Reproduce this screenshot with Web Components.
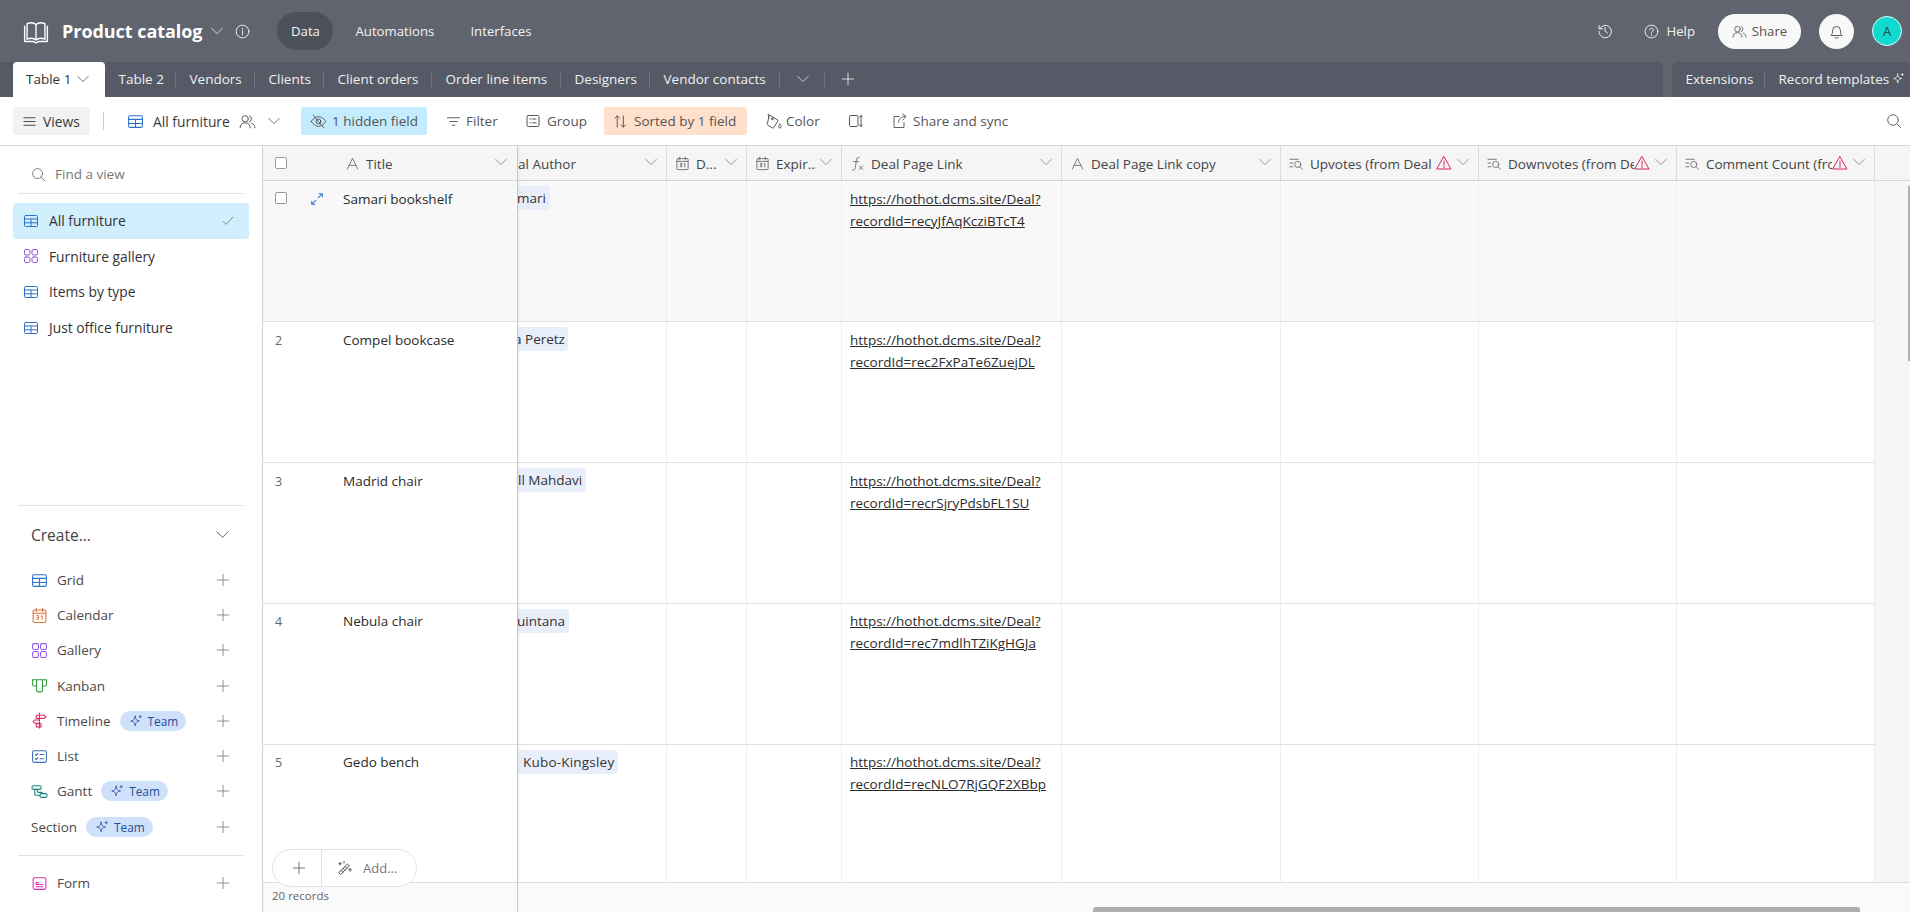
<!doctype html>
<html lang="en"><head><meta charset="utf-8"><title>Product catalog</title>
<style>
html,body{margin:0;height:912px;overflow:hidden;background:#fff;font-family:"Open Sans","Noto Sans",sans-serif;font-size:13.5px;color:#333}
</style></head><body>
<app-root></app-root>
<script>
const P={
grid:'<rect x="1.5" y="2.5" width="13" height="11" rx="1.2"/><path d="M1.5 6h13M1.5 9.8h13M8 6v7.5"/>',
gallery:'<rect x="1.5" y="1.5" width="5.5" height="5.5" rx="1.6"/><rect x="9" y="1.5" width="5.5" height="5.5" rx="1.6"/><rect x="1.5" y="9" width="5.5" height="5.5" rx="1.6"/><rect x="9" y="9" width="5.5" height="5.5" rx="1.6"/>',
calendar:'<rect x="2" y="2.8" width="12" height="11.7" rx="1.2"/><path d="M2 5.8h12M5 1.2v3M11 1.2v3"/><path d="M5.6 8h1.5v3.5H5.4M5.6 9.7h1.4M9.5 8.6l1-.6v3.6" stroke-width=".9"/>',
kanban:'<path d="M1.5 2.5h3.7v6H3a1.5 1.5 0 0 1-1.5-1.5zM5.2 2.5h5.6v10a1.5 1.5 0 0 1-1.5 1.5H6.7a1.5 1.5 0 0 1-1.5-1.5zM10.8 2.5h3.7V7A1.5 1.5 0 0 1 13 8.500h-2.200z"/>',
timeline:'<path d="M8 1v14M5 3h7.500l1.500 1.500L12.500 6H5zM3.500 7.500H8v3H3.500L2 9zM5 11h4.500v3H5z"/>',
list:'<rect x="1.500" y="2.500" width="13" height="11" rx="1.400"/><path d="M4 6l1 1 1.500-2M4 10l1 1 1.500-2M8.500 6.200h3.500M8.500 10.200h3.500"/>',
gantt:'<rect x="1" y="2.500" width="8.500" height="3.500" rx="1"/><rect x="8.500" y="10" width="6.500" height="3.500" rx="1"/><path d="M3.500 6v4.500a1 1 0 0 0 1 1h4M6 6v1.800a1 1 0 0 0 1 1h3.500"/>',
form:'<rect x="2" y="2.500" width="12" height="11" rx="1.500"/><path d="M4.800 7.200V9h6.400M4.800 11h6.400M4.800 7.200h2.400"/>',
plus:'<path d="M8 1.500v13M1.500 8h13"/>',
chev:'<path d="M1 4.500l7 7 7-7"/>',
check:'<path d="M1.500 8.500l4 4 9-9.500"/>',
search:'<circle cx="7" cy="7" r="5.300"/><path d="M11 11l3.800 3.800"/>',
book:'<path d="M2.500 3.500c2-.8 4-.8 5.500.5 1.500-1.300 3.500-1.300 5.500-.5v9.500c-2-.8-4-.8-5.500.5-1.500-1.300-3.500-1.300-5.500-.5zM8 4v9.500M1 5v9.500h5.500l1.500.8 1.500-.8H15V5"/>',
info:'<circle cx="8" cy="8" r="6.800"/><path d="M8 7.200v4.300M8 4.500v1.100"/>',
history:'<path d="M2.800 5.500A6.200 6.200 0 1 1 2 8.500M2 2.500v3.300h3.300M8 4.500V8l2.500 2"/>',
help:'<circle cx="8" cy="8" r="6.800"/><path d="M6 6.200a2 2 0 1 1 3 1.800c-.7.400-1 .8-1 1.600M8 11.200v.9"/>',
people:'<circle cx="5.800" cy="5.500" r="3"/><path d="M1 14c0-3 2-4.800 4.800-4.800s4.800 1.800 4.800 4.800M9.800 2.700a3 3 0 0 1 0 5.600M12 9.700c1.800.7 3 2.200 3 4.300"/>',
bell:'<path d="M3 11.500c1-1 1.300-2 1.300-4.500a3.700 3.700 0 0 1 7.400 0c0 2.500.3 3.500 1.300 4.500zM6.500 13.500a1.700 1.700 0 0 0 3 0"/>',
sparkle:'<path d="M7 2.500C7.400 6 8.500 7.600 12 8 8.500 8.400 7.400 10 7 13.500 6.600 10 5.500 8.400 2 8 5.500 7.600 6.600 6 7 2.500zM12.800 1.800v2.600M11.500 3.100h2.600"/>',
menu:'<path d="M2 4h12M2 8h12M2 12h12"/>',
eyeoff:'<path d="M1.200 8S3.700 3.500 8 3.500 14.800 8 14.800 8 12.300 12.500 8 12.500 1.200 8 1.200 8z"/><circle cx="8" cy="8" r="2.300"/><path d="M3 2l10 12"/>',
filter:'<path d="M1.500 4h13M4 8h8M6.500 12h3"/>',
group:'<rect x="2" y="2.500" width="12" height="11" rx="1.200"/><path d="M5 6h.8M7.500 6H11M5 9.800h.8M7.500 9.800H11"/>',
sort:'<path d="M4.500 14V2M2 4.500L4.500 2 7 4.500M11 2v12M8.500 11.500L11 14l2.500-2.500"/>',
color:'<path d="M4.500 2l8 5-4.300 6.800a1 1 0 0 1-1.400.3l-4.400-2.800a1 1 0 0 1-.3-1.400z"/><circle cx="6.800" cy="5.500" r=".9"/><path d="M14 10.500c.8 1 1.200 1.700 1.200 2.400a1.200 1.200 0 0 1-2.400 0c0-.7.400-1.400 1.200-2.400zM3.500 4.500L3 1"/>',
rowh:'<rect x="1.500" y="2.500" width="8.500" height="11" rx="1.200"/><path d="M13 2.500v11M11.700 4l1.300-1.500L14.300 4M11.700 12l1.300 1.500 1.300-1.500"/>',
share:'<path d="M7 3.500H2v11h10v-5M6.500 9.500c0-3.500 2.500-6 7-6M10.500 1l3.500 2.500L11 7"/>',
expand:'<path d="M9.500 6.500L14 2M10.500 2H14v3.500M6.500 9.500L2 14M5.500 14H2v-3.500"/>',
wand:'<path d="M2 12.500L10.500 4l1.800 1.800-8.500 8.500zM4 10.500l2 2M6 8.500l2 2M8 6.500l2 2M3 2.500v2.500M1.800 3.700h2.500M13 8.500v2.500M11.800 9.700h2.500M7 1.500v1.500"/>',
text:'<path d="M2.500 14L8 2.500 13.500 14M4.500 10h7"/>',
lookup:'<path d="M1 3.500h9M1 7.500h3M1 11.500h3"/><circle cx="9.300" cy="9" r="3.300"/><path d="M11.700 11.400L14.500 14.200"/>',
cal2:'<rect x="2" y="2.800" width="12" height="11.700" rx="1.200"/><path d="M2 5.800h12M5 1.200v3M11 1.200v3"/><path d="M5.600 8h1.500v3.500H5.400M5.600 9.700h1.400M9.500 8.600l1-.6v3.600" stroke-width=".9"/>',
fx:'<path d="M10 1.500C8 1 7.200 2.300 6.900 4.500L5.600 12.500c-.3 2-1 3-3.100 2.500M3.800 6h5.200"/><path d="M10 10.500l3.500 3.800M13.500 10.500L10 14.300"/>',
warn:'<path d="M8 1.800L15 14H1z"/><path d="M8 6v4.300M8 11.500v1"/>'
};
function def(name,render){customElements.define(name,class extends HTMLElement{connectedCallback(){if(this.shadowRoot)return;const r=this.attachShadow({mode:'open'});r.innerHTML=render(this)}})}
def('x-icon',e=>{const s=e.getAttribute('s')||16,w=e.getAttribute('w')||1,c=e.getAttribute('c')||'currentColor',m=e.getAttribute('m')||0;
 return `<style>:host{display:inline-flex;flex:none;width:${s}px;height:${s}px;margin-left:${m}px}svg{width:100%;height:100%;display:block}</style><svg viewBox="0 0 16 16" fill="none" stroke="${c}" stroke-width="${w}" stroke-linecap="round" stroke-linejoin="round">${P[e.getAttribute('n')]}</svg>`});

def('top-bar',()=>`<style>
:host{display:flex;align-items:center;height:62px;background:#60646f;color:#fff;padding-left:23px;box-sizing:border-box}
.t{font-size:18px;font-weight:700;letter-spacing:-.05px;margin-left:13px;white-space:nowrap}
.n{font-size:13.200px;color:#f3f3f5;white-space:nowrap}
.pill{margin-left:27px;width:56px;height:38px;border-radius:19px;background:#4d515c;display:flex;align-items:center;justify-content:center}
.r{margin-left:auto;display:flex;align-items:center;padding-right:8px}
.sh{width:83px;height:35px;border-radius:18px;background:#f8f8f8;color:#555;display:flex;align-items:center;justify-content:center;gap:5px;margin-left:23px}
.bell{width:35px;height:35px;border-radius:50%;background:#f8f8f8;color:#555;display:flex;align-items:center;justify-content:center;margin-left:18px}
.av{width:30px;height:30px;box-sizing:border-box;border-radius:50%;background:#11dbd0;border:1px solid #e8fbfa;color:#26474a;font-size:13px;display:flex;align-items:center;justify-content:center;margin-left:18px}
</style>
<x-icon n="book" s="26" w=".85"></x-icon><span class="t">Product catalog</span>
<x-icon n="chev" s="12" m="9"></x-icon><x-icon n="info" s="15" w=".9" m="12"></x-icon>
<span class="pill n">Data</span><span class="n" style="margin-left:22px">Automations</span><span class="n" style="margin-left:36px">Interfaces</span>
<div class="r"><x-icon n="history" s="16" w=".9"></x-icon><x-icon n="help" s="15" w=".9" m="31"></x-icon><span class="n" style="margin-left:7px">Help</span>
<span class="sh n" style="color:#555"><x-icon n="people" s="15" w=".9"></x-icon>Share</span><span class="bell"><x-icon n="bell" s="17" w=".9"></x-icon></span><span class="av">A</span></div>`);

def('tab-item',e=>{const w=e.getAttribute('w'),a=e.hasAttribute('active');return `<style>
:host{display:flex;align-items:center;box-sizing:border-box;height:35px;padding-bottom:2px;width:${w}px;padding-left:${a?13:13.5}px;white-space:nowrap;font-size:13.500px;color:${a?'#333':'#f0f0f2'};position:relative;${a?'background:#fff;border-radius:4px 4px 0 0;':''}}
${e.hasAttribute('sep')?':host::after{content:"";position:absolute;right:0;top:10px;height:16px;width:1px;background:#6f737e}':''}
::slotted(x-icon){margin-left:6px}
</style><slot></slot>`});
def('tab-bar',()=>`<style>
:host{display:flex;height:35px;background:#60646f}
.a,.b{display:flex;background:#565a66}
.a{width:1663px;padding-left:13px;box-sizing:border-box;border-top-right-radius:6px}
.b{margin-left:9px;flex:1;border-top-left-radius:6px;padding-left:0}
</style><div class="a">
<tab-item w="92" active>Table 1<x-icon n="chev" s="12" c="#444"></x-icon></tab-item>
<tab-item w="71" sep>Table 2</tab-item><tab-item w="79" sep>Vendors</tab-item><tab-item w="69" sep>Clients</tab-item><tab-item w="108" sep>Client orders</tab-item><tab-item w="129" sep>Order line items</tab-item><tab-item w="89" sep>Designers</tab-item><tab-item w="130" sep>Vendor contacts</tab-item>
<tab-item w="45" sep><x-icon n="chev" s="12" c="#eee" style="margin-left:3px"></x-icon></tab-item><tab-item w="40"><x-icon n="plus" s="14" c="#eee" style="margin-left:2px"></x-icon></tab-item>
</div><div class="b"><tab-item w="93" sep>Extensions</tab-item><tab-item w="145">Record templates<x-icon n="sparkle" s="13" c="#eee" style="margin-left:3px"></x-icon></tab-item></div>`);

def('tool-btn',e=>{const w=e.getAttribute('w'),bg=e.getAttribute('bg')||'transparent',m=e.getAttribute('m')||0,g=e.getAttribute('g')||6,pl=e.getAttribute('pl')||0;return `<style>
:host{display:flex;align-items:center;flex:none;box-sizing:border-box;height:28px;width:${w}px;margin-left:${m}px;padding-left:${pl}px;gap:${g}px;background:${bg};border-radius:3px;color:#555;font-size:13.500px;white-space:nowrap}
</style><slot></slot>`});
def('tool-bar',()=>`<style>
:host{display:flex;align-items:center;height:49px;box-sizing:border-box;background:#fff;border-bottom:1px solid #d4d4d4;padding-left:13px}
.sep{width:1px;height:18px;background:#ccc;margin-left:13px;flex:none}
.s{margin-left:auto;margin-right:8px;color:#666}
b{font-weight:500;color:#3a3a3a;font-size:13.800px}
</style>
<tool-btn w="77" bg="#f2f2f2" pl="9" g="6"><x-icon n="menu" s="15" c="#444"></x-icon><b>Views</b></tool-btn><span class="sep"></span>
<tool-btn w="160" m="23" g="9"><x-icon n="grid" s="17" c="#2d72c8"></x-icon><b>All furniture</b><x-icon n="people" s="17" w=".9" c="#555"></x-icon><x-icon n="chev" s="12" c="#444" m="3"></x-icon></tool-btn>
<tool-btn w="126" m="14" bg="#c4ecff" pl="9" g="5"><x-icon n="eyeoff" s="17" w=".9"></x-icon>1 hidden field</tool-btn>
<tool-btn w="60" m="19" g="5"><x-icon n="filter" s="15"></x-icon>Filter</tool-btn>
<tool-btn w="70" m="19"><x-icon n="group" s="16"></x-icon>Group</tool-btn>
<tool-btn w="143" m="9" bg="#ffe0cc" pl="9" g="6"><x-icon n="sort" s="15"></x-icon>Sorted by 1 field</tool-btn>
<tool-btn w="60" m="18" g="4"><x-icon n="color" s="17" w=".9"></x-icon>Color</tool-btn>
<tool-btn w="17" m="23"><x-icon n="rowh" s="16"></x-icon></tool-btn>
<tool-btn w="120" m="27" g="5"><x-icon n="share" s="16" w=".9"></x-icon>Share and sync</tool-btn>
<x-icon class="s" n="search" s="16"></x-icon>`);

def('view-item',e=>{const a=e.hasAttribute('active');return `<style>
:host{display:flex;align-items:center;box-sizing:border-box;height:35.600px;width:236px;margin-left:13px;padding-left:10px;gap:10px;border-radius:4px;font-size:13.800px;font-weight:500;color:#333;white-space:nowrap;${a?'background:#d1eefc;':''}}
.c{margin-left:auto;margin-right:15px;color:#666}
</style><x-icon n="${e.getAttribute('i')}" s="16" c="${e.getAttribute('c')}"></x-icon><slot></slot>${a?'<x-icon class="c" n="check" s="12"></x-icon>':''}`});

def('team-badge',()=>`<style>:host{display:inline-flex;align-items:center;gap:5px;box-sizing:border-box;height:20px;padding:0 8px 0 9px;border-radius:10px;background:#cfe0fb;color:#1f4f96;font-size:11.800px;margin-left:9px}</style><x-icon n="sparkle" s="14" w=".9"></x-icon>Team`);
def('create-item',e=>{const i=e.getAttribute('i');return `<style>
:host{display:flex;align-items:center;box-sizing:border-box;height:${e.getAttribute('h')||35.200}px;padding-left:31px;padding-right:32px;font-size:13.500px;font-weight:500;color:#4a4a4a;white-space:nowrap}
.n{margin-left:9px}.p{margin-left:auto;color:#777}
</style>${i?`<x-icon n="${i}" s="17" c="${e.getAttribute('c')}"></x-icon><span class="n"><slot></slot></span>`:'<slot></slot>'}<slot name="b"></slot><x-icon class="p" n="plus" s="14" w=".9"></x-icon>`});
def('side-bar',()=>`<style>
:host{display:flex;flex-direction:column;flex:none;width:263px;box-sizing:border-box;border-right:1px solid #cfcfcf;height:100%;overflow:hidden;background:#fff;padding-bottom:11px}
.find{display:flex;align-items:center;height:48px;margin:0 18px;padding:9px 0 0 13px;gap:9px;border-bottom:1px solid #e2e2e2;box-sizing:border-box;color:#777;font-size:13.500px;flex:none}
.vs{padding-top:9px;flex:1}
.d{height:1px;background:#e2e2e2;margin:0 18px;flex:none}
.cr{display:flex;align-items:center;height:56px;padding:1px 33px 0 31px;font-size:15.500px;font-weight:500;color:#444}
.cr x-icon{margin-left:auto}
</style>
<div class="find"><x-icon n="search" s="15"></x-icon>Find a view</div>
<div class="vs"><view-item i="grid" c="#2d72c8" active>All furniture</view-item><view-item i="gallery" c="#8b55e0">Furniture gallery</view-item><view-item i="grid" c="#2d72c8">Items by type</view-item><view-item i="grid" c="#2d72c8">Just office furniture</view-item></div>
<div class="d"></div>
<div class="cr">Create...<x-icon n="chev" s="13"></x-icon></div>
<div>
<create-item i="grid" c="#2d72c8">Grid</create-item><create-item i="calendar" c="#d9733f">Calendar</create-item><create-item i="gallery" c="#8b55e0">Gallery</create-item><create-item i="kanban" c="#2b9a3e">Kanban</create-item>
<create-item i="timeline" c="#d92d63">Timeline<team-badge slot="b"></team-badge></create-item><create-item i="list" c="#3b6fb5">List</create-item><create-item i="gantt" c="#17857a">Gantt<team-badge slot="b"></team-badge></create-item>
<create-item h="37">Section<team-badge slot="b"></team-badge></create-item></div>
<div class="d" style="margin-top:9px"></div>
<div style="padding-top:10px"><create-item i="form" c="#d42eaa">Form</create-item></div>`);

const rows=[['Samari bookshelf','mari','recyJfAqKcziBTcT4','margin-left:-1px;padding-right:4px'],['Compel bookcase','a Peretz','rec2FxPaTe6ZuejDL','margin-left:-4px;padding-right:3px'],['Madrid chair','ll Mahdavi','recrSjryPdsbFL1SU','padding-right:4px'],['Nebula chair','uintana','rec7mdlhTZiKgHGJa','margin-left:-1px;padding-right:4px'],['Gedo bench','Kubo-Kingsley','recNLO7RjGQF2XBbp','padding-left:5px;padding-right:4px;letter-spacing:.2px']];
const CW=[149,80,95,220,219,198,198,198];
const HD=[[null,'al Author'],['cal2','D...'],['cal2','Expir...'],['fx','Deal Page Link'],['text','Deal Page Link copy'],['lookup','Upvotes (from Deal',1],['lookup','Downvotes (from Deal',1],['lookup','Comment Count (from Deal',1]];
def('grid-head',e=>`<style>
:host{display:flex;align-items:center;box-sizing:border-box;height:100%;padding-left:${e.getAttribute('pl')||8}px;padding-right:9px;border-right:1px solid #dcdcdc;color:#444;font-size:13.500px;white-space:nowrap;overflow:hidden;gap:0}
.t{margin-left:6px;overflow:hidden;flex:1;min-width:0;padding-top:1px}
.w{margin-right:1px}.c{color:#777;margin-left:4px;margin-top:-2px}
</style>${e.getAttribute('i')?`<x-icon n="${e.getAttribute('i')}" s="15" c="#666" w=".9"></x-icon>`:''}<span class="t" ${e.getAttribute('i')?'':'style="margin-left:0"'}>${e.getAttribute('l')}</span>${e.hasAttribute('warn')?'<x-icon class="w" n="warn" s="16" c="#d4285c"></x-icon>':''}<x-icon class="c" n="chev" s="12"></x-icon>`);
def('data-grid',()=>{
 const box='display:block;width:12px;height:12px;border:1px solid #9a9a9a;border-radius:2px;box-sizing:border-box;background:#fff';
 let left='',right='';
 const hcols=HD.map((h,i)=>`<grid-head style="width:${CW[i]}px;flex:none" ${h[0]?`i="${h[0]}"`:'pl="0"'} l="${h[1]}" ${h[2]?'warn':''}></grid-head>`).join('');
 rows.forEach((r,i)=>{
  const cl=`row${i==0?' hov':''}${i>=3?' u':''}`;
  left+=`<div class="${cl}"><div class="num">${i==0?`<span style="${box}"></span>`:i+1}</div><div class="ex">${i==0?'<x-icon n="expand" s="14" c="#2d72c8" w="1.200"></x-icon>':''}</div><div class="ti">${r[0]}</div></div>`;
  right+=`<div class="${cl}">`+CW.map((w,c)=>`<div class="cell" style="width:${w}px">${c==0?`<span class="chip" style="${r[3]}">${r[1]}</span>`:c==3?`<u class="lnk">https://hothot.dcms.site/Deal?<br>recordId=${r[2]}</u>`:''}</div>`).join('')+`</div>`;
 });
 return `<style>
:host{flex:1;min-width:0;display:flex;flex-direction:column;height:100%;position:relative;background:#f6f6f6;overflow:hidden}
.body{flex:1;min-height:0;display:flex;overflow:hidden;border-bottom:1px solid #dcdcdc}
.fz{flex:none;width:255px;box-sizing:border-box;border-right:1px solid #c8c8c8;background:#fff;box-shadow:2px 0 3px rgba(0,0,0,.04);position:relative;z-index:1}
.sc{flex:1;min-width:0;overflow:hidden}
.sc .row,.sc .u{width:1357px}
.hd{display:flex;height:35px;box-sizing:border-box;background:#f5f5f5;border-bottom:1px solid #d4d4d4}
.fz .hd{align-items:center;padding-left:12px}
.fz .hd .t{margin-left:6px;flex:1;color:#444;padding-top:1px}
.row,.u{display:flex;height:141px;box-sizing:border-box;background:#fff;border-bottom:1px solid #e1e1e1}
.hov{background:#f8f8f8}
.num{width:35px;padding:10px 0 0 12px;box-sizing:border-box;color:#666;font-size:12.500px;flex:none;height:36px}
.hov .num{padding-top:11px}
.ex{width:33px;flex:none;padding:11px 0 0 12px;box-sizing:border-box}
.ti{padding:9px 0 0 0;line-height:18px;color:#2b2b2b;margin-left:12px}
.cell{flex:none;box-sizing:border-box;height:100%;border-right:1px solid #eee;overflow:hidden;white-space:nowrap}
.chip{display:inline-block;height:24px;line-height:24px;padding:0 5px 0 0;margin-top:5px;background:#e9eefb;border-radius:0 4px 4px 0;color:#333}
.lnk{display:block;margin:8px 0 0 8px;line-height:21.500px;color:#2b2b2b}
.u .ti{padding-top:8px}.u .lnk{margin-top:7px}.u .num{padding-top:9px}
.ft{flex:none;height:29px;display:flex;background:#fafafa}
.rec{width:255px;box-sizing:border-box;border-right:1px solid #c8c8c8;padding:5px 0 0 9px;font-size:11.500px;color:#666;position:relative;z-index:1}
.add{position:absolute;z-index:2;left:9px;bottom:25px;height:38px;width:145px;box-sizing:border-box;border:1px solid #e4e4e4;border-radius:19px;background:#fff;display:flex;align-items:center;color:#777;font-size:13px}
.add .p{width:49px;height:100%;display:flex;align-items:center;justify-content:center;padding-left:3px;border-right:1px solid #e4e4e4;box-sizing:border-box;color:#555}
.sb{position:absolute;left:830px;bottom:0;width:767px;height:5px;background:#aeaeae;border-radius:3px 3px 0 0;z-index:3}
.vb{position:absolute;right:0;top:40px;width:2px;height:175px;background:#b0b0b0;z-index:3}
</style>
<div class="body"><div class="fz"><div class="hd"><span style="${box}"></span><x-icon n="text" s="15" c="#666" w=".9" m="58"></x-icon><span class="t">Title</span><x-icon n="chev" s="12" c="#777" style="margin-right:10px;margin-top:-2px"></x-icon></div>${left}</div>
<div class="sc"><div class="hd">${hcols}</div>${right}</div></div>
<div class="ft"><div class="rec">20 records</div></div>
<div class="add"><span class="p"><x-icon n="plus" s="14" w=".9"></x-icon></span><x-icon n="wand" s="16" m="15" c="#555"></x-icon><span style="margin-left:10px">Add...</span></div>
<div class="sb"></div><div class="vb"></div>`});
def('app-root',()=>`<style>:host{display:flex;flex-direction:column;height:912px;width:1910px;overflow:hidden}.m{flex:1;min-height:0;display:flex}</style>
<top-bar></top-bar><tab-bar></tab-bar><tool-bar></tool-bar><div class="m"><side-bar></side-bar><data-grid></data-grid></div>`);
</script></body></html>
